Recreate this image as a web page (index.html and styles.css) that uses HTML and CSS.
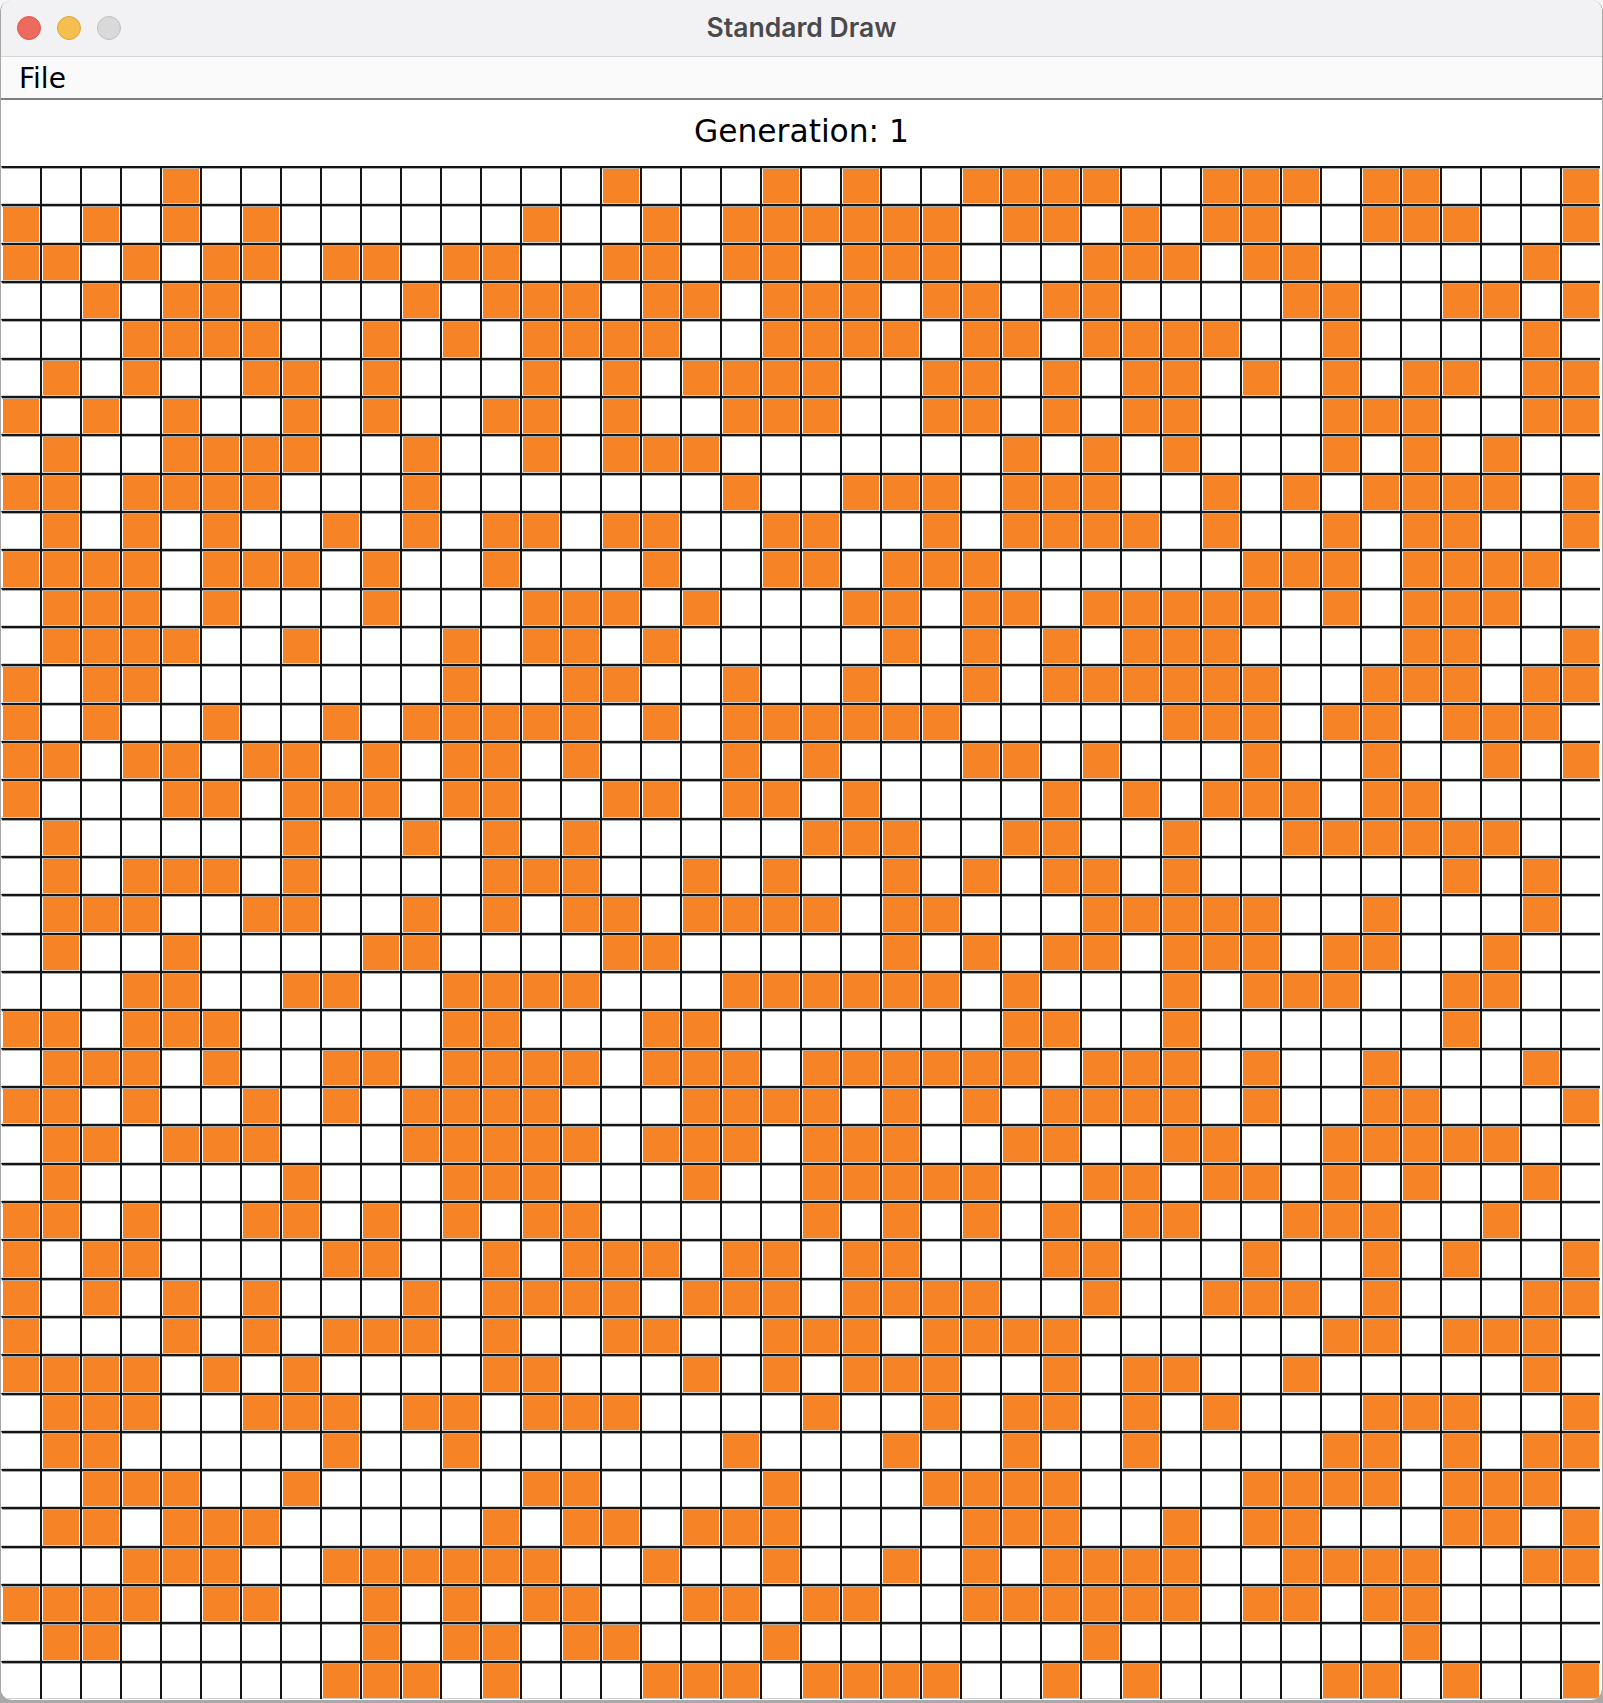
FILE: index.html
```html
<!DOCTYPE html>
<html lang="en">
  <head>
    <meta charset="UTF-8" />
    <meta name="viewport" content="width=device-width, initial-scale=1.0" />
    <title>Standard Draw</title>
    <link rel="stylesheet" href="styles.css">
  </head>
  <body>
    <div class="window">
      <div class="titlebar">
        <div class="lights">
          <span class="light red"></span>
          <span class="light yellow"></span>
          <span class="light gray"></span>
        </div>
        <div class="title">Standard Draw</div>
      </div>
      <div class="menubar">File</div>
      <div class="generation">Generation: 1</div>
      <div id="board" class="board"></div>
    </div>
    <script src="grid.js"></script>
  </body>
</html>
```
FILE: styles.css
```css
html,
body {
  margin: 0;
  padding: 0;
}

body {
  width: 1603px;
  height: 1703px;
  overflow: hidden;
  background: linear-gradient(#f6f6f6, #a9a9a9);
}

.window {
  box-sizing: border-box;
  width: 1603px;
  height: 1700px;
  border-left: 1px solid #a6a6a6;
  border-right: 1px solid #a6a6a6;
  border-radius: 12px;
  overflow: hidden;
  background-color: #ffffff;
}

.titlebar {
  position: relative;
  display: flex;
  align-items: center;
  justify-content: center;
  height: 54px;
  padding-bottom: 2px;
  background-color: #f2f2f5;
  border-bottom: 1px solid #d6d6d6;
}

.lights {
  position: absolute;
  left: 16px;
  top: 16px;
  display: flex;
  gap: 16px;
}

.light {
  box-sizing: border-box;
  width: 24px;
  height: 24px;
  border-radius: 50%;
  border: 1px solid;
}

.red {
  background-color: #ee6a5f;
  border-color: #dc5a50;
}

.yellow {
  background-color: #f5bf4f;
  border-color: #dfa63e;
}

.gray {
  background-color: #d9d9d9;
  border-color: #c0c0c0;
}

.title {
  font-family: "Inter", "Liberation Sans", sans-serif;
  font-size: 26.5px;
  font-weight: 600;
  color: #4a4a4c;
}

.menubar {
  box-sizing: border-box;
  height: 43px;
  padding-left: 18px;
  line-height: 43px;
  font-family: "DejaVu Sans", sans-serif;
  font-size: 28px;
  color: #000000;
  background-color: #fafafa;
  border-bottom: 2px solid #808080;
}

.generation {
  height: 66px;
  line-height: 62px;
  text-align: center;
  font-family: "DejaVu Sans", sans-serif;
  font-size: 31.3px;
  color: #000000;
}

.board {
  display: grid;
  grid-template-columns: 39px repeat(39, 40px);
  grid-template-rows: repeat(40, 38.33px);
}

.cell {
  box-sizing: border-box;
  padding: 1px;
  border-left: 2px solid #151515;
  border-top: 2px solid #151515;
  box-shadow: inset 0 1px 0 #a8a8a8, inset 0 -1px 0 #cfcfcf;
  background-color: #ffffff;
}

.cell.first {
  border-left: 1px solid #ffffff;
}

.cell.on {
  background-color: #f68427;
  background-clip: content-box;
}
```
FILE: grid.js
```js
// live cells of each row, by column
const alive = [
  [4, 15, 19, 21, 24, 25, 26, 27, 30, 31, 32, 34, 35, 39],
  [0, 2, 4, 6, 13, 16, 18, 19, 20, 21, 22, 23, 25, 26, 28, 30, 31, 34, 35, 36, 39],
  [0, 1, 3, 5, 6, 8, 9, 11, 12, 15, 16, 18, 19, 21, 22, 23, 27, 28, 29, 31, 32, 38],
  [2, 4, 5, 10, 12, 13, 14, 16, 17, 19, 20, 21, 23, 24, 26, 27, 32, 33, 36, 37, 39],
  [3, 4, 5, 6, 9, 11, 13, 14, 15, 16, 19, 20, 21, 22, 24, 25, 27, 28, 29, 30, 33, 38],
  [1, 3, 6, 7, 9, 13, 15, 17, 18, 19, 20, 23, 24, 26, 28, 29, 31, 33, 35, 36, 38, 39],
  [0, 2, 4, 7, 9, 12, 13, 15, 18, 19, 20, 23, 24, 26, 28, 29, 33, 34, 35, 38, 39],
  [1, 4, 5, 6, 7, 10, 13, 15, 16, 17, 25, 27, 29, 33, 35, 37],
  [0, 1, 3, 4, 5, 6, 10, 18, 21, 22, 23, 25, 26, 27, 30, 32, 34, 35, 36, 37, 39],
  [1, 3, 5, 8, 10, 12, 13, 15, 16, 19, 20, 23, 25, 26, 27, 28, 30, 33, 35, 36, 39],
  [0, 1, 2, 3, 5, 6, 7, 9, 12, 16, 19, 20, 22, 23, 24, 31, 32, 33, 35, 36, 37, 38],
  [1, 2, 3, 5, 9, 13, 14, 15, 17, 21, 22, 24, 25, 27, 28, 29, 30, 31, 33, 35, 36, 37],
  [1, 2, 3, 4, 7, 11, 13, 14, 16, 22, 24, 26, 28, 29, 30, 35, 36, 39],
  [0, 2, 3, 11, 14, 15, 18, 21, 24, 26, 27, 28, 29, 30, 31, 34, 35, 36, 38, 39],
  [0, 2, 5, 8, 10, 11, 12, 13, 14, 16, 18, 19, 20, 21, 22, 23, 29, 30, 31, 33, 34, 36, 37, 38],
  [0, 1, 3, 4, 6, 7, 9, 11, 12, 14, 18, 20, 24, 25, 27, 31, 34, 37, 39],
  [0, 4, 5, 7, 8, 9, 11, 12, 15, 16, 18, 19, 21, 26, 28, 30, 31, 32, 34, 35],
  [1, 7, 10, 12, 14, 20, 21, 22, 25, 26, 29, 32, 33, 34, 35, 36, 37],
  [1, 3, 4, 5, 7, 12, 13, 14, 17, 19, 22, 24, 26, 27, 29, 36, 38],
  [1, 2, 3, 6, 7, 10, 12, 14, 15, 17, 18, 19, 20, 22, 23, 27, 28, 29, 30, 31, 34, 38],
  [1, 4, 9, 10, 15, 16, 22, 24, 26, 27, 29, 30, 31, 33, 34, 37],
  [3, 4, 7, 8, 11, 12, 13, 14, 18, 19, 20, 21, 22, 23, 25, 29, 31, 32, 33, 36, 37],
  [0, 1, 3, 4, 5, 11, 12, 16, 17, 25, 26, 29, 36],
  [1, 2, 3, 5, 8, 9, 11, 12, 13, 14, 16, 17, 18, 20, 21, 22, 23, 24, 25, 27, 28, 29, 31, 34, 38],
  [0, 1, 3, 6, 8, 10, 11, 12, 13, 17, 18, 19, 20, 22, 24, 26, 27, 28, 29, 31, 34, 35, 39],
  [1, 2, 4, 5, 6, 10, 11, 12, 13, 14, 16, 17, 18, 20, 21, 22, 25, 26, 29, 30, 33, 34, 35, 36, 37],
  [1, 7, 11, 12, 13, 17, 20, 21, 22, 23, 24, 27, 28, 30, 31, 33, 35, 38],
  [0, 1, 3, 6, 7, 9, 11, 13, 14, 20, 22, 24, 26, 28, 29, 32, 33, 34, 37],
  [0, 2, 3, 8, 9, 12, 14, 15, 16, 18, 19, 21, 22, 26, 27, 31, 34, 36, 39],
  [0, 2, 4, 6, 10, 12, 13, 14, 15, 17, 18, 19, 21, 22, 23, 24, 27, 30, 31, 32, 34, 38, 39],
  [0, 4, 6, 8, 9, 10, 12, 15, 16, 19, 20, 21, 23, 24, 25, 26, 33, 34, 36, 37, 38],
  [0, 1, 2, 3, 5, 7, 12, 13, 17, 19, 21, 22, 23, 26, 28, 29, 32, 38],
  [1, 2, 3, 6, 7, 8, 10, 11, 13, 14, 15, 20, 23, 25, 26, 28, 30, 34, 35, 36, 39],
  [1, 2, 8, 11, 18, 22, 25, 28, 33, 34, 36, 38, 39],
  [2, 3, 4, 7, 13, 14, 19, 23, 24, 25, 26, 31, 32, 33, 34, 36, 37, 38],
  [1, 2, 4, 5, 6, 12, 14, 15, 17, 18, 19, 24, 25, 26, 29, 31, 32, 36, 37, 39],
  [3, 4, 5, 8, 9, 10, 11, 12, 13, 16, 19, 22, 24, 26, 27, 28, 29, 32, 33, 34, 35, 38, 39],
  [0, 1, 2, 3, 5, 6, 9, 11, 13, 14, 17, 18, 20, 21, 24, 25, 26, 27, 28, 29, 31, 32, 34, 35],
  [1, 2, 9, 11, 12, 14, 15, 19, 27, 35],
  [8, 9, 10, 12, 16, 17, 18, 20, 21, 22, 23, 26, 28, 33, 34, 36, 39],
];

const board = document.getElementById("board");

alive.forEach((row) => {
  for (let col = 0; col < 40; col++) {
    const cell = document.createElement("div");
    cell.className = "cell";
    if (col === 0) cell.classList.add("first");
    if (row.includes(col)) cell.classList.add("on");
    board.appendChild(cell);
  }
});
```
